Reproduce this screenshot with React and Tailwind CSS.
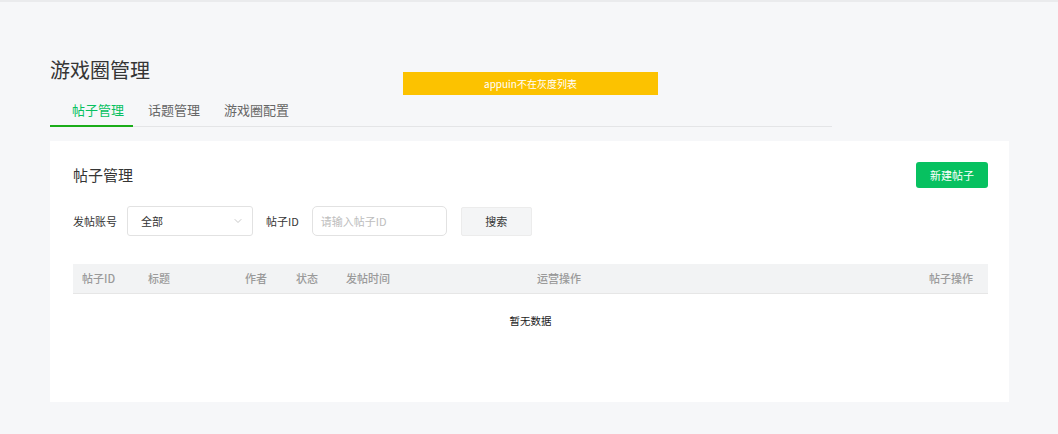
import { ChevronDown } from 'lucide-react';

export default function App() {
  const cols = ['帖子ID', '标题', '作者', '状态', '发帖时间', '运营操作'];

  return (
    <div className="relative min-h-screen bg-[#f6f7f9] border-t-2 border-[#eaebed] font-['Noto_Sans_CJK_SC',sans-serif] text-[#333] px-[50px] pt-[53px] pb-[32px]">
      {/* toast */}
      <div className="absolute left-[403px] top-[70px] w-[255px] h-[23px] bg-[#fcc200] text-white text-[10px] flex items-center justify-center">
        appuin不在灰度列表
      </div>

      <h1 className="text-[20px] leading-[30px] text-[#353535]">游戏圈管理</h1>

      {/* tabs */}
      <div className="w-[782px] mt-[15px] flex border-b border-[#e4e5e7] text-[13px] leading-[20px]">
        <div className="w-[83px] pl-[22px] pb-[5px] border-b-[2px] border-[#1aad19] -mb-px text-[#07c160]">帖子管理</div>
        <div className="ml-[15px] pb-[6px] text-[#666]">话题管理</div>
        <div className="ml-[24px] pb-[6px] text-[#666]">游戏圈配置</div>
      </div>

      {/* card */}
      <div className="mt-[14px] w-[959px] bg-white pl-[23px] pr-[21px] pt-[21px] pb-[54px]">
        <div className="flex items-center justify-between">
          <h2 className="text-[15px] text-[#353535]">帖子管理</h2>
          <button className="w-[72px] h-[26px] rounded-[3px] bg-[#07c160] text-white text-[11px]">新建帖子</button>
        </div>

        <div className="mt-[18px] flex items-center text-[11px]">
          <span className="text-[#353535]">发帖账号</span>
          <div className="ml-[10px] w-[126px] h-[30px] border border-[#e2e2e2] rounded-[3px] flex items-center justify-between pl-[13px] pr-[8px]">
            <span>全部</span>
            <ChevronDown className="w-[12px] h-[12px] text-[#b5b5b5]" strokeWidth={1.5} />
          </div>
          <span className="ml-[13px] text-[#353535]">帖子ID</span>
          <div className="ml-[13px] w-[135px] h-[30px] border border-[#e2e2e2] rounded-[5px] flex items-center pl-[8px] text-[#bdbdbd]">
            请输入帖子ID
          </div>
          <button className="ml-[14px] w-[71px] h-[29px] bg-[#f4f5f6] border border-[#ececec] rounded-[2px] text-[#353535]">搜索</button>
        </div>

        {/* table */}
        <div className="mt-[28px]">
          <div className="h-[30px] bg-[#f2f3f4] border-b border-[#e6e6e6] grid grid-cols-[66px_97px_51px_50px_191px_1fr_auto] items-center text-[11px] font-medium text-[#9a9a9a]">
            {cols.map((c) => (
              <span key={c} className="pl-[9px]">{c}</span>
            ))}
            <span className="pr-[15px]">帖子操作</span>
          </div>
          <div className="h-[54px] flex items-center justify-center text-[10.5px] text-[#222]">暂无数据</div>
        </div>
      </div>
    </div>
  );
}
